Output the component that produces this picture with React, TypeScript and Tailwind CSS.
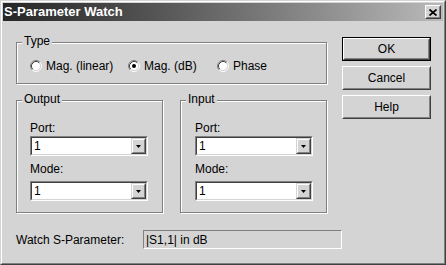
import React from "react";

function Radio({ checked }: { checked?: boolean }) {
  return (
    <svg width="12" height="12" viewBox="0 0 12 12" className="shrink-0">
      <circle cx="6" cy="6" r="4.5" fill="#fff" />
      <path d="M2.11 9.89 A5.5 5.5 0 0 1 9.89 2.11" fill="none" stroke="#808080" />
      <path d="M9.89 2.11 A5.5 5.5 0 0 1 2.11 9.89" fill="none" stroke="#fff" />
      <path d="M2.82 9.18 A4.5 4.5 0 0 1 9.18 2.82" fill="none" stroke="#404040" />
      <path d="M9.18 2.82 A4.5 4.5 0 0 1 2.82 9.18" fill="none" stroke="#d4d4d4" />
      {checked && <circle cx="6" cy="6" r="2" fill="#000" />}
    </svg>
  );
}

function Group({ label, className, children }: { label: string; className: string; children: React.ReactNode }) {
  return (
    <div className={`relative border border-[#808080] shadow-[1px_1px_0_#fff,inset_1px_1px_0_#fff] ${className}`}>
      <span className="absolute left-[5px] top-[-9px] px-[2px] bg-[#d4d4d4] leading-[14px]">{label}</span>
      {children}
    </div>
  );
}

function Combo() {
  return (
    <div className="w-[118px] h-[20px] border border-t-[#808080] border-l-[#808080] border-b-white border-r-white">
      <div className="h-full flex bg-white border border-t-[#404040] border-l-[#404040] border-b-[#d4d4d4] border-r-[#d4d4d4]">
        <span className="flex-1 pl-[2px] leading-[16px]">1</span>
        <div className="w-[15px] border border-t-[#d4d4d4] border-l-[#d4d4d4] border-b-[#404040] border-r-[#404040]">
          <div className="h-full flex items-center justify-center bg-[#d4d4d4] border border-t-white border-l-white border-b-[#808080] border-r-[#808080]">
            <svg width="5" height="3" viewBox="0 0 5 3">
              <path d="M0 0h5l-2.5 3z" fill="#000" />
            </svg>
          </div>
        </div>
      </div>
    </div>
  );
}

function PortBox({ label, pad }: { label: string; pad: string }) {
  return (
    <Group label={label} className="w-[147px] h-[113px]">
      <div className={`flex flex-col pt-[20px] ${pad}`}>
        <span className="leading-[14px]">Port:</span>
        <div className="mt-[1px]">
          <Combo />
        </div>
        <span className="leading-[14px] mt-[6px]">Mode:</span>
        <div className="mt-[5px]">
          <Combo />
        </div>
      </div>
    </Group>
  );
}

function Btn({ label, isDefault }: { label: string; isDefault?: boolean }) {
  const inner = (
    <div className="h-full border border-t-white border-l-white border-b-[#404040] border-r-[#404040]">
      <div className="h-full flex items-center justify-center border border-t-[#d4d4d4] border-l-[#d4d4d4] border-b-[#808080] border-r-[#808080]">
        {label}
      </div>
    </div>
  );
  return isDefault ? (
    <div className="h-[24px] border border-black">{inner}</div>
  ) : (
    <div className="h-[24px]">{inner}</div>
  );
}

export default function App() {
  return (
    <div className="w-[446px] h-[265px] bg-[#d4d4d4] text-black text-[12px] font-['Liberation_Sans',Arial,sans-serif] border border-t-[#d4d4d4] border-l-[#d4d4d4] border-b-[#404040] border-r-[#404040]">
      <div className="h-full flex flex-col p-[1px] border border-t-white border-l-white border-b-[#808080] border-r-[#808080]">
        {/* title bar */}
        <div className="h-[18px] flex items-center justify-between bg-gradient-to-r from-[#262626] to-[#bababa] pl-[1px] pr-[2px]">
          <span className="text-white font-bold text-[13px] leading-[18px]">S-Parameter Watch</span>
          <div className="w-[16px] h-[14px] border border-t-white border-l-white border-b-[#404040] border-r-[#404040] bg-[#d4d4d4]">
            <div className="h-full flex items-center justify-center border border-t-[#d4d4d4] border-l-[#d4d4d4] border-b-[#808080] border-r-[#808080]">
              <svg width="8" height="7" viewBox="0 0 8 7">
                <path d="M0.5 0.5 L7.5 6.5 M7.5 0.5 L0.5 6.5" stroke="#000" strokeWidth="1.7" />
              </svg>
            </div>
          </div>
        </div>

        <div className="flex flex-col pl-[13px] pt-[16px]">
          <div className="flex items-start">
            <div className="w-[311px] pt-[5px] flex flex-col">
              <Group label="Type" className="h-[42px]">
                <div className="flex items-center pl-[13px] pt-[14px]">
                  <div className="w-[98px] flex items-center gap-[4px]">
                    <Radio />
                    <span>Mag. (linear)</span>
                  </div>
                  <div className="w-[89px] flex items-center gap-[4px]">
                    <Radio checked />
                    <span>Mag. (dB)</span>
                  </div>
                  <div className="flex items-center gap-[4px]">
                    <Radio />
                    <span>Phase</span>
                  </div>
                </div>
              </Group>
              <div className="flex gap-[17px] mt-[16px]">
                <PortBox label="Output" pad="pl-[13px]" />
                <PortBox label="Input" pad="pl-[14px]" />
              </div>
            </div>
            <div className="ml-[15px] w-[89px] flex flex-col gap-[5px]">
              <Btn label="OK" isDefault />
              <Btn label="Cancel" />
              <Btn label="Help" />
            </div>
          </div>

          <div className="flex items-center mt-[17px]">
            <span className="w-[127px]">Watch S-Parameter:</span>
            <div className="w-[199px] h-[19px] flex items-center pl-[2px] border border-t-[#808080] border-l-[#808080] border-b-white border-r-white">
              |S1,1| in dB
            </div>
          </div>
        </div>
      </div>
    </div>
  );
}
